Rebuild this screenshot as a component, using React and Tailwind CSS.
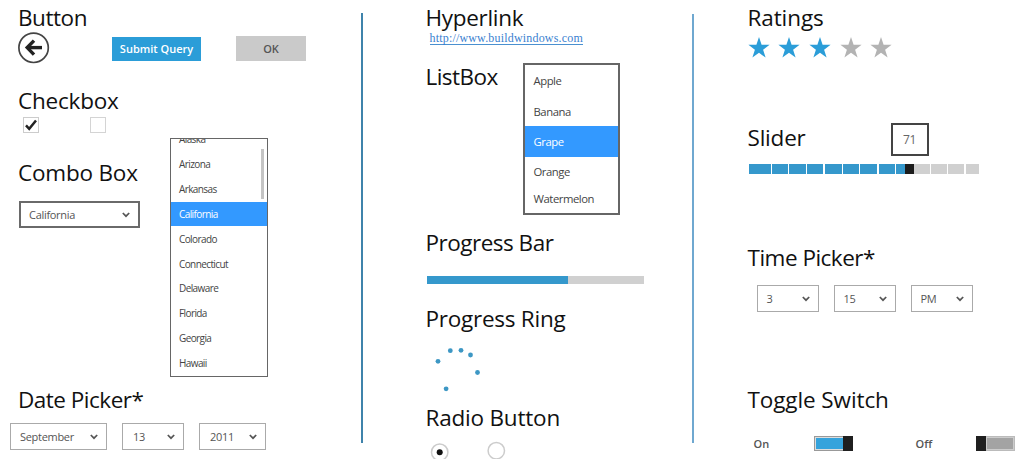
import clsx from 'clsx'

const states = ['Alaska', 'Arizona', 'Arkansas', 'California', 'Colorado', 'Connecticut', 'Delaware', 'Florida', 'Georgia', 'Hawaii']

const ringDots = [
  [12, 15.3],
  [24.3, 4.7],
  [35, 4.3],
  [44.5, 9],
  [51.5, 26.5],
  [20.1, 42.8],
]

// widths of the filled slider segments
const segments = [22, 16, 17, 16, 17, 16, 17, 16]

function Heading({ children, className }) {
  return <h2 className={clsx('h-[30px] shrink-0 whitespace-nowrap text-[22.5px] leading-[32px] text-[#111]', className)}>{children}</h2>
}

function Chevron({ className }) {
  return (
    <svg viewBox="0 0 8 6" className={clsx('h-1.5 w-2 shrink-0', className)} fill="none" stroke="#555" strokeWidth="1.7">
      <path d="M0.8 1 L4 4.2 L7.2 1" />
    </svg>
  )
}

function Select({ label, className }) {
  return (
    <div className={clsx('flex h-[27px] items-center justify-between pr-2 text-[11px] tracking-[-0.3px] text-[#555]', className)}>
      <span className="pt-0.5">{label}</span>
      <Chevron />
    </div>
  )
}

function Star({ on }) {
  return (
    <svg viewBox="0 0 22 21" className={clsx('h-[21px] w-[22px]', on ? 'fill-[#2b9dd8]' : 'fill-[#b3b3b3]')}>
      <path d="M11 0 L13.6 7.8 L21.6 7.8 L15.1 12.7 L17.6 20.6 L11 15.8 L4.4 20.6 L6.9 12.7 L0.4 7.8 L8.4 7.8 Z" />
    </svg>
  )
}

function FirstColumn() {
  return (
    <section className="flex h-full w-[361px] flex-col pt-0.5">
      <Heading className="ml-[18px] tracking-[-0.45px]">Button</Heading>
      <div className="flex h-8 pl-[18px]">
        <svg viewBox="0 0 32 32" className="h-8 w-8" fill="none" stroke="#222">
          <circle cx="15.6" cy="15.8" r="14.7" strokeWidth="1.7" stroke="#444" />
          <path d="M9 15.6 H24" strokeWidth="3.4" />
          <path d="M16 8.6 L9.2 15.6 L16 22.6" strokeWidth="3.4" />
        </svg>
        <button className="mt-[5px] ml-[62px] h-[24px] w-[89px] bg-[#2b9dd8] text-[11px] font-semibold text-white">Submit Query</button>
        <button className="mt-1 ml-[35px] h-[25px] w-[70px] bg-[#cacaca] pt-0.5 text-[11px] font-semibold text-[#555]">OK</button>
      </div>
      <Heading className="mt-[21px] ml-[18px] tracking-[-0.2px]">Checkbox</Heading>
      <div className="mt-0.5 flex gap-[51px] pl-[23px]">
        <div className="h-4 w-4 border border-[#ccc]">
          <svg viewBox="0 0 14 14" className="h-3.5 w-3.5" fill="none" stroke="#222" strokeWidth="2.5">
            <path d="M2 7.4 L5.2 10.8 L12 2.5" />
          </svg>
        </div>
        <div className="h-4 w-4 border border-[#d4d4d4]" />
      </div>

      <div className="mt-[5px] flex h-[239px]">
        <div className="w-[170px] pt-[19px]">
          <Heading className="ml-[18px] tracking-[-0.2px]">Combo Box</Heading>
          <Select label="California" className="mt-3.5 ml-[19px] w-[121px] border-2 border-[#6a6a6a] pl-2" />
        </div>
        <div className="relative w-[98px] overflow-hidden border-[1.5px] border-[#666]">
          <ul className="-mt-3 text-[10px] tracking-[-0.6px] text-[#444]">
            {states.map((name) => (
              <li
                key={name}
                className={clsx('flex h-[24.85px] items-center pt-px pl-2', name === 'California' && 'bg-[#3399ff] text-white')}
              >
                {name}
              </li>
            ))}
          </ul>
          <div className="absolute top-[10px] right-[3px] h-[50px] w-[3px] bg-[#c4c4c4]" />
        </div>
      </div>

      <Heading className="mt-[7px] ml-[18px] tracking-[-0.5px]">Date Picker*</Heading>
      <div className="mt-[9px] flex pl-[10px]">
        <Select label="September" className="w-[97px] border border-[#aaa] pl-[9px]" />
        <Select label="13" className="ml-[15px] w-[62px] border border-[#aaa] pl-[10px]" />
        <Select label="2011" className="ml-[15px] w-[67px] border border-[#aaa] pl-[10px]" />
      </div>
    </section>
  )
}

function SecondColumn() {
  return (
    <section className="flex h-full w-[329px] flex-col pt-0.5 pl-[63px]">
      <Heading className="tracking-[-0.3px]">Hyperlink</Heading>
      <div className="flex h-[13px] shrink-0 pl-[4px]">
        <a href="#" className="h-[13px] border-b border-[#4a90d0] font-['Liberation_Serif',serif] text-[12px] leading-[13px] tracking-[0.18px] whitespace-nowrap text-[#3b7fd0]">
          http://www.buildwindows.com
        </a>
      </div>
      <div className="mt-4 flex h-[154px] shrink-0">
        <Heading className="w-[97px] tracking-[-0.55px]">ListBox</Heading>
        <ul className="mt-0.5 h-[152px] w-[97px] border-2 border-[#666] text-[11.3px] tracking-[-0.45px] text-[#444]">
          <li className="flex h-[31px] items-center pt-0.5 pl-[9px]">Apple</li>
          <li className="flex h-[30px] items-center pt-0.5 pl-[9px]">Banana</li>
          <li className="flex h-[31px] items-center bg-[#3399ff] pt-px pl-[9px] text-white">Grape</li>
          <li className="flex h-[30px] items-center pt-px pl-[9px]">Orange</li>
          <li className="flex h-[24px] items-center pl-[9px]">Watermelon</li>
        </ul>
      </div>
      <Heading className="mt-3 tracking-[-0.5px]">Progress Bar</Heading>
      <div className="mt-[19px] ml-px flex h-2 w-[217px] shrink-0 bg-[#d0d0d0]">
        <div className="w-[141px] bg-[#3598cc]" />
      </div>
      <Heading className="mt-[19px] tracking-[-0.25px]">Progress Ring</Heading>
      <svg viewBox="0 0 60 50" className="mt-[13px] h-[50px] w-[60px] shrink-0" fill="#3d97c4">
        {ringDots.map(([x, y]) => (
          <circle key={x} cx={x} cy={y} r="2.4" />
        ))}
      </svg>
      <Heading className="mt-1.5 tracking-[-0.2px]">Radio Button</Heading>
      <svg viewBox="0 0 90 27" className="mt-[9px] h-[27px] w-[90px] shrink-0" fill="white" stroke="#ccc" strokeWidth="1.5">
        <circle cx="13.7" cy="11.2" r="8.2" />
        <circle cx="13.7" cy="11.2" r="3" fill="#111" stroke="none" />
        <circle cx="70.3" cy="9.7" r="8.2" />
      </svg>
    </section>
  )
}

function ThirdColumn() {
  return (
    <section className="flex h-full flex-1 flex-col pt-0.5 pl-[54px]">
      <Heading className="tracking-[-0.1px]">Ratings</Heading>
      <div className="mt-[5px] flex gap-[8.7px]">
        <Star on />
        <Star on />
        <Star on />
        <Star />
        <Star />
      </div>
      <div className="mt-[64px] flex h-[35px]">
        <Heading className="w-[143px] tracking-[-0.2px]">Slider</Heading>
        <div className="mt-px flex h-[33px] w-[38px] items-center justify-center border-2 border-[#444] pt-px text-[12px] tracking-[-0.3px] text-[#666]">71</div>
      </div>
      <div className="mt-[7px] ml-px flex h-[10px]">
        {segments.map((width, i) => (
          <div key={i} className="mr-[1.3px] bg-[#3598cc]" style={{ width }} />
        ))}
        <div className="w-[9px] bg-[#3598cc]" />
        <div className="w-[9px] bg-[#1c1c1c]" />
        <div className="mr-[1.3px] w-4 bg-[#d0d0d0]" />
        <div className="mr-[1.3px] w-4 bg-[#d0d0d0]" />
        <div className="mr-[1.3px] w-4 bg-[#d0d0d0]" />
        <div className="w-[13px] bg-[#d0d0d0]" />
      </div>
      <Heading className="mt-[68px] tracking-[-0.5px]">Time Picker*</Heading>
      <div className="mt-[13px] flex gap-[15px] pl-[9px]">
        <Select label="3" className="w-[62px] border border-[#aaa] pl-[9px]" />
        <Select label="15" className="w-[62px] border border-[#aaa] pl-[9px]" />
        <Select label="PM" className="w-[62px] border border-[#aaa] pl-[9px]" />
      </div>
      <Heading className="mt-[72px] tracking-[-0.1px]">Toggle Switch</Heading>
      <div className="mt-[21px] flex h-4 items-center text-[11px] font-semibold text-[#555]">
        <span className="w-[66px] pt-0.5 pl-1.5">On</span>
        <div className="flex h-[15px] w-[39px] border border-[#999] bg-[#ddd]">
          <div className="my-px ml-px flex-1 bg-[#35a3dc]" />
          <div className="-my-px -mr-px w-[10px] bg-[#1f1f1f]" />
        </div>
        <span className="ml-[63px] w-[60px] pt-0.5">Off</span>
        <div className="flex h-[15px] w-[39px] border border-[#bbb] bg-[#ccc]">
          <div className="-my-px -ml-px w-[10px] bg-[#1f1f1f]" />
          <div className="m-px flex-1 bg-[#a3a3a3]" />
        </div>
      </div>
    </section>
  )
}

function App() {
  return (
    <main className="flex h-[459px] w-[1024px] overflow-hidden bg-white font-['Open_Sans','Noto_Sans',sans-serif]">
      <FirstColumn />
      <div className="mt-[13px] h-[430px] w-[1.5px] shrink-0 bg-[#3f83ab]" />
      <SecondColumn />
      <div className="mt-[14px] h-[429px] w-0.5 shrink-0 bg-[#6fa8d0]" />
      <ThirdColumn />
    </main>
  )
}

export default App
